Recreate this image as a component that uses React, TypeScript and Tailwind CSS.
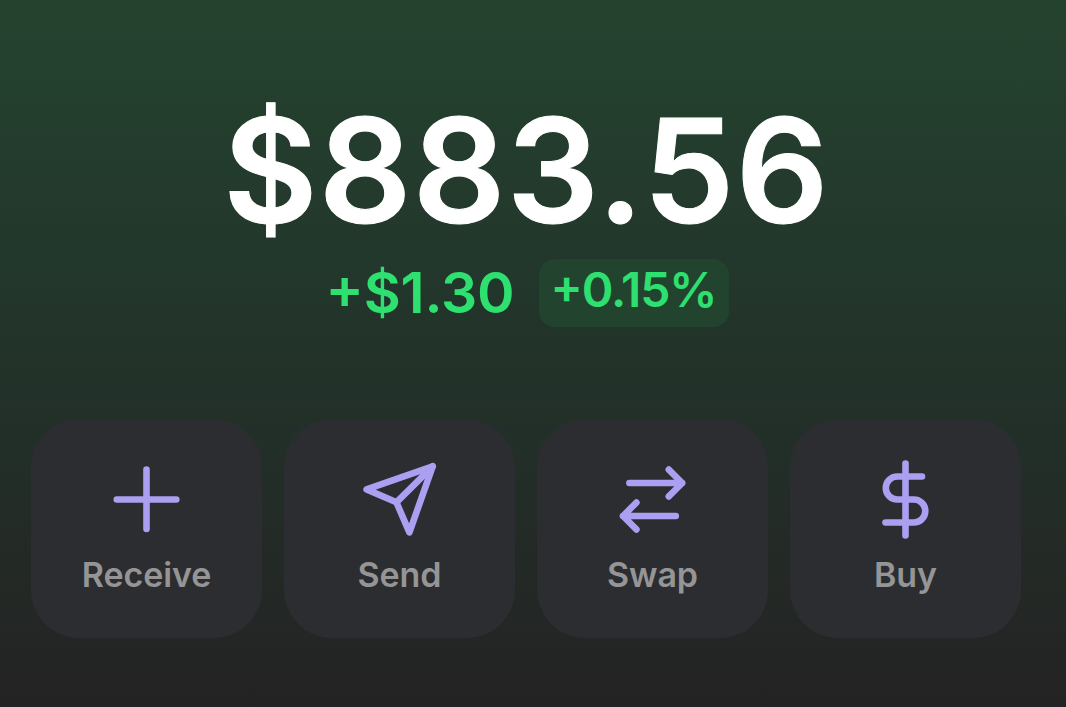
const PlusIcon = () => (
  <svg width="80" height="80" viewBox="0 0 80 80" fill="none" stroke="currentColor" strokeWidth="6.6" strokeLinecap="round">
    <path d="M39.5 10.5 V70 M9.8 40.5 H69.3" />
  </svg>
);

const SendIcon = () => (
  <svg width="80" height="80" viewBox="0 0 80 80" fill="none" stroke="currentColor" strokeWidth="6.6" strokeLinecap="round" strokeLinejoin="round">
    <path d="M72.7 7.3 L49.4 73.4 L36.4 43.3 L6.6 30.4 Z" />
    <path d="M72.7 7.3 L36.4 43.3" />
  </svg>
);

const SwapIcon = () => (
  <svg width="80" height="80" viewBox="0 0 80 80" fill="none" stroke="currentColor" strokeWidth="6.6" strokeLinecap="round" strokeLinejoin="round">
    <path d="M16.4 24 H69.2 M55.8 10.6 L69.2 24 L55.8 37.4" />
    <path d="M62.8 57 H10 M23.4 43.6 L10 57 L23.4 70.4" />
  </svg>
);

const BuyIcon = () => (
  <svg width="80" height="80" viewBox="0 0 80 80" fill="none" stroke="currentColor" strokeWidth="6.6" strokeLinecap="round" strokeLinejoin="round">
    <path d="M39.5 4.5 V76.5" />
    <path d="M56 17.5 H31.3 A11.5 11.5 0 0 0 31.3 40.5 H47.8 A11.5 11.5 0 0 1 47.8 63.5 H19.5" />
  </svg>
);

const actions = [
  { label: "Receive", Icon: PlusIcon },
  { label: "Send", Icon: SendIcon },
  { label: "Swap", Icon: SwapIcon },
  { label: "Buy", Icon: BuyIcon },
];

const App = () => {
  return (
    <div className="h-[707px] w-[1066px] overflow-hidden bg-linear-to-b from-[#24432f] via-[#22332a] via-50% to-[#232323] font-['Inter',sans-serif]">
      <div className="flex h-[419px] flex-col items-center pt-[91px] pr-3">
        <div className="mr-px text-[145px] leading-[160px] font-semibold tracking-[1.2px] text-white [-webkit-text-stroke:1px_white]">$883.56</div>
        <div className="flex items-start gap-[26px] pt-2 text-[#2ee070] [font-feature-settings:'case']">
          <span className="w-[187px] text-right text-[57px] leading-[68px] font-semibold whitespace-nowrap tracking-[-0.2px]">+$1.30</span>
          <span className="h-[68px] w-[190px] rounded-2xl bg-[#22442f] text-center text-[48px] leading-[61px] font-semibold tracking-[-1.1px]">+0.15%</span>
        </div>
      </div>
      <div className="flex gap-[22px] pl-[31px] text-[#ab9ff2]">
        {actions.map(({ label, Icon }) => (
          <div key={label} className="flex h-[219px] w-[231px] flex-col items-center rounded-[48px] bg-[#2c2d30] pt-10">
            <Icon />
            <span className="mt-[14px] text-[34px] leading-[43px] font-semibold tracking-[-0.1px] text-[#959596]">{label}</span>
          </div>
        ))}
      </div>
    </div>
  );
};

export default App;
